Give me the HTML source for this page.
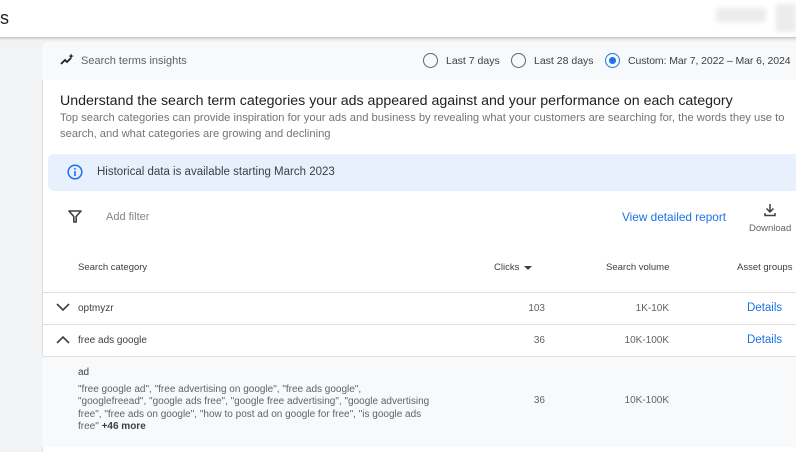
<!DOCTYPE html>
<html><head><style>
*{margin:0;padding:0;box-sizing:border-box}
body{width:796px;height:445px;overflow:hidden;background:#f1f3f4;font-family:"Liberation Sans",Arial,sans-serif;position:relative;color:#3c4043}
.a{position:absolute;white-space:nowrap}
.top{position:absolute;left:0;top:0;width:796px;height:38px;background:#fff;border-bottom:1px solid #c8c8c8;box-shadow:0 1px 2px rgba(0,0,0,.15)}
.card{position:absolute;left:42px;top:42px;width:760px;height:410px;background:#fff;border-radius:6px 0 0 0;border-left:1px solid #e0e0e0}
.hdr{position:absolute;left:42px;top:42px;width:760px;height:38px;background:#f8f9fa;border-radius:6px 0 0 0}
.radio{position:absolute;width:15px;height:15px;border:1.5px solid #5f6368;border-radius:50%}
.line{position:absolute;left:42px;width:760px;height:1px;background:#e0e0e0}
.s{font-size:12px;color:#5f6368}
.r{text-align:right}
</style></head><body>
<div class="top"></div>
<div class="a" style="left:0;top:8px;font-size:18px;color:#202124">s</div>
<div class="a" style="left:716px;top:8px;width:50px;height:14px;background:#ececec;filter:blur(2px)"></div>
<div class="a" style="left:776px;top:4px;width:20px;height:28px;background:#ececec;filter:blur(2px)"></div>
<div class="card"></div>
<div class="hdr"></div>
<svg class="a" style="left:60px;top:53px" width="14" height="14" viewBox="0 0 14 14"><path d="M1 11 L5 7 L7 9 L11 5" stroke="#202124" stroke-width="1.8" fill="none"/><path d="M11 0.5 L12 2.5 L14 3 L12 3.8 L11 6 L10.2 3.8 L8.5 3 L10.2 2.5Z" fill="#202124"/></svg>
<div class="a s" style="left:81px;top:55px;font-size:11px">Search terms insights</div>
<div class="radio" style="left:423px;top:53px"></div>
<div class="a s" style="left:446px;top:55px;font-size:10.5px;color:#3c4043">Last 7 days</div>
<div class="radio" style="left:511px;top:53px"></div>
<div class="a s" style="left:534px;top:55px;font-size:10.5px;color:#3c4043">Last 28 days</div>
<div class="radio" style="left:605px;top:53px;border-color:#1a73e8"><div style="position:absolute;left:2.5px;top:2.5px;width:7px;height:7px;border-radius:50%;background:#1a73e8"></div></div>
<div class="a s" style="left:628px;top:55px;font-size:10.5px;color:#3c4043;letter-spacing:-0.1px">Custom: Mar 7, 2022 – Mar 6, 2024</div>
<div class="a" style="left:60px;top:93px;font-size:14.2px;color:#202124">Understand the search term categories your ads appeared against and your performance on each category</div>
<div class="a" style="left:60px;top:111px;font-size:11.2px;color:#70757a;line-height:15.5px">Top search categories can provide inspiration for your ads and business by revealing what your customers are searching for, the words they use to<br>search, and what categories are growing and declining</div>
<div class="a" style="left:48px;top:154px;width:760px;height:37px;background:#e8f0fe;border-radius:6px"></div>
<svg class="a" style="left:67px;top:164px" width="16" height="16" viewBox="0 0 16 16"><circle cx="8" cy="8" r="6.8" stroke="#1a73e8" stroke-width="1.5" fill="none"/><rect x="7.2" y="7" width="1.6" height="5" fill="#1a73e8"/><rect x="7.2" y="4" width="1.6" height="1.6" fill="#1a73e8"/></svg>
<div class="a" style="left:97px;top:166px;font-size:11.5px;color:#3c4043">Historical data is available starting March 2023</div>
<svg class="a" style="left:68px;top:210px" width="14" height="13" viewBox="0 0 14 13"><path d="M1 1 H13 L8.2 6.5 V12 H5.8 V6.5 Z" stroke="#3c4043" stroke-width="1.6" fill="none" stroke-linejoin="round"/></svg>
<div class="a" style="left:106px;top:211px;font-size:11px;color:#80868b">Add filter</div>
<div class="a" style="left:622px;top:210px;font-size:11.8px;color:#1a73e8">View detailed report</div>
<svg class="a" style="left:763px;top:203px" width="14" height="14" viewBox="0 0 14 14"><path d="M7 1 V9 M3.5 5.5 L7 9 L10.5 5.5 M2 10 V12.5 H12 V10" stroke="#3c4043" stroke-width="1.5" fill="none"/></svg>
<div class="a" style="left:749px;top:223px;font-size:9.5px;color:#5f6368">Download</div>
<div class="a" style="left:78px;top:262px;font-size:9.5px;color:#3c4043">Search category</div>
<div class="a" style="left:494px;top:262px;font-size:9.5px;color:#3c4043">Clicks</div>
<div class="a" style="left:524px;top:266px;width:0;height:0;border-left:4px solid transparent;border-right:4px solid transparent;border-top:4px solid #3c4043"></div>
<div class="a" style="left:606px;top:262px;font-size:9.5px;color:#3c4043">Search volume</div>
<div class="a" style="left:737px;top:262px;font-size:9.5px;color:#3c4043">Asset groups</div>
<div class="line" style="top:292px"></div>
<svg class="a" style="left:56px;top:303px" width="14" height="9" viewBox="0 0 14 9"><path d="M1 1 L7 7 L13 1" stroke="#3c4043" stroke-width="1.6" fill="none"/></svg>
<div class="a" style="left:78px;top:303px;font-size:10px">optmyzr</div>
<div class="a s r" style="left:501px;top:303px;width:44px;font-size:10px">103</div>
<div class="a s r" style="left:601px;top:303px;width:68px;font-size:10px">1K-10K</div>
<div class="a" style="left:747px;top:302px;font-size:11.5px;color:#1a73e8">Details</div>
<div class="line" style="top:324px"></div>
<svg class="a" style="left:56px;top:335px" width="14" height="9" viewBox="0 0 14 9"><path d="M1 8 L7 2 L13 8" stroke="#3c4043" stroke-width="1.6" fill="none"/></svg>
<div class="a" style="left:78px;top:335px;font-size:10px">free ads google</div>
<div class="a s r" style="left:501px;top:335px;width:44px;font-size:10px">36</div>
<div class="a s r" style="left:601px;top:335px;width:68px;font-size:10px">10K-100K</div>
<div class="a" style="left:747px;top:334px;font-size:11.5px;color:#1a73e8">Details</div>
<div class="line" style="top:356px"></div>
<div class="a" style="left:42px;top:357px;width:760px;height:90px;background:#f8f9fa"></div>
<div class="a" style="left:78px;top:367px;font-size:10px">ad</div>
<div class="a" style="left:78px;top:384px;font-size:10px;color:#5f6368;line-height:12.4px">"free google ad", "free advertising on google", "free ads google",<br>"googlefreead", "google ads free", "google free advertising", "google advertising<br>free", "free ads on google", "how to post ad on google for free", "is google ads<br>free" <b style="color:#3c4043">+46 more</b></div>
<div class="a s r" style="left:501px;top:395px;width:44px;font-size:10px">36</div>
<div class="a s r" style="left:601px;top:395px;width:68px;font-size:10px">10K-100K</div>
</body></html>
